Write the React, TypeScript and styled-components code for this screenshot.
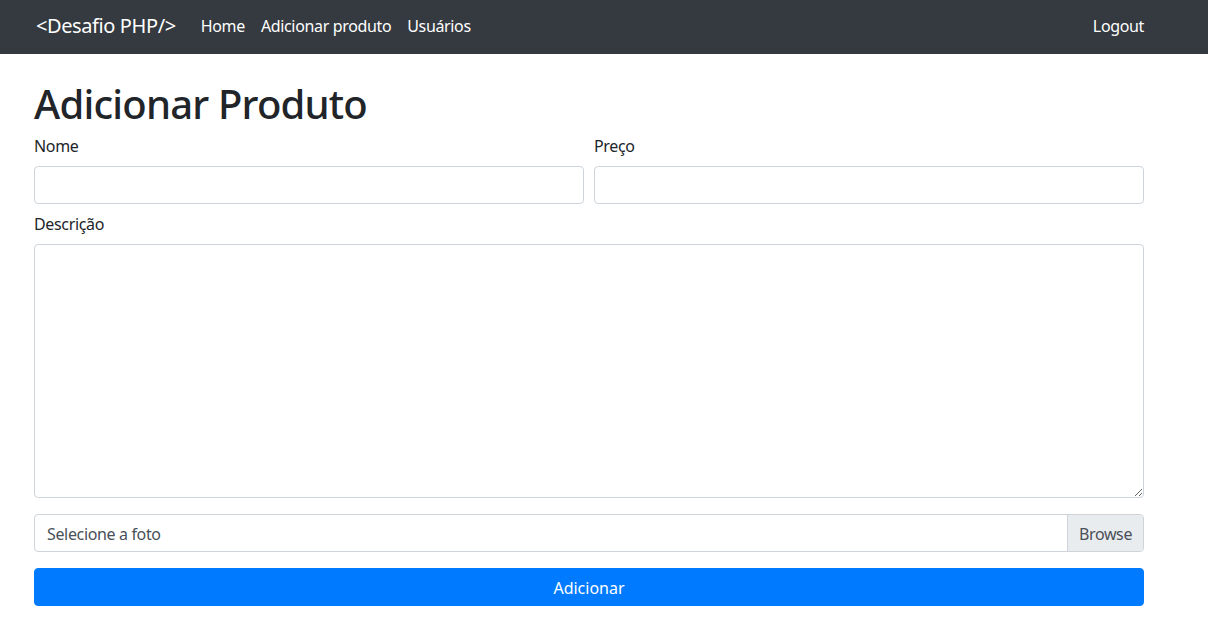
import React from "react";
import styled, { createGlobalStyle } from "styled-components";

const Global = createGlobalStyle`
  * { box-sizing: border-box; }
  body {
    margin: 0;
    font-family: "Noto Sans", "Open Sans", sans-serif;
    font-size: 16px;
    line-height: 1.5;
    letter-spacing: -0.35px;
    color: #212529;
    background: #fff;
  }
`;

const Navbar = styled.nav`
  background: #343a40;
  height: 54px;
`;

const Frame = styled.div`
  width: 1178px;
  height: 100%;
`;

const NavInner = styled.div`
  width: 1140px;
  height: 100%;
  margin: 0 auto;
  padding: 0 15px 2px;
  display: flex;
  align-items: center;
`;

const Brand = styled.a`
  color: #fff;
  font-size: 20px;
  line-height: 30px;
  letter-spacing: -0.4px;
  margin-left: 2px;
  margin-right: 17px;
  text-decoration: none;
  white-space: nowrap;
`;

const NavList = styled.div`
  display: flex;
  align-items: center;
`;

const NavLink = styled.a<{ $last?: boolean }>`
  color: #fff;
  font-size: 16px;
  line-height: 24px;
  padding: 0 ${(p) => (p.$last ? "0" : "8px")};
  text-decoration: none;
  white-space: nowrap;
`;

const Spacer = styled.div`
  flex: 1;
`;

const Container = styled.main`
  width: 1140px;
  margin: 0 auto;
  padding: 0 15px;
`;

const Title = styled.h1`
  font-size: 40px;
  font-weight: 500;
  line-height: 48px;
  letter-spacing: -0.8px;
  margin: 26px 0 6px;
`;

const Row = styled.div`
  display: grid;
  grid-template-columns: 1fr 1fr;
  gap: 10px;
  margin-bottom: 8px;
`;

const Group = styled.div<{ $mb?: number }>`
  display: flex;
  flex-direction: column;
  margin-bottom: ${(p) => p.$mb ?? 0}px;
`;

const Label = styled.label`
  font-size: 16px;
  line-height: 24px;
  margin-bottom: 8px;
`;

const Input = styled.input`
  height: 38px;
  border: 1px solid #ced4da;
  border-radius: 4px;
  padding: 6px 12px;
  font: inherit;
  color: #495057;
  outline: none;
`;

const TextArea = styled.textarea`
  height: 254px;
  border: 1px solid #ced4da;
  border-radius: 4px;
  padding: 6px 12px;
  font: inherit;
  color: #495057;
  resize: vertical;
  outline: none;
`;

const FileBox = styled.label`
  display: flex;
  height: 38px;
  border: 1px solid #ced4da;
  border-radius: 4px;
  overflow: hidden;
  margin-bottom: 16px;
  color: #495057;
  font-size: 16px;
  line-height: 24px;
`;

const FileText = styled.span`
  flex: 1;
  padding: 7px 12px 5px;
`;

const BrowseBtn = styled.span`
  width: 76px;
  text-align: center;
  background: #e9ecef;
  border-left: 1px solid #ced4da;
  padding: 7px 0 5px;
`;

const Submit = styled.button`
  width: 100%;
  height: 38px;
  background: #007bff;
  color: #fff;
  border: 1px solid #007bff;
  border-radius: 4px;
  font: inherit;
  font-size: 16px;
  line-height: 24px;
  padding: 2px 12px 0;
  cursor: pointer;
`;

export default function App() {
  return (
    <>
      <Global />
      <Navbar>
        <Frame>
          <NavInner>
            <Brand href="#">&lt;Desafio PHP/&gt;</Brand>
            <NavList>
              <NavLink href="#">Home</NavLink>
              <NavLink href="#">Adicionar produto</NavLink>
              <NavLink href="#">Usuários</NavLink>
            </NavList>
            <Spacer />
            <NavLink href="#" $last>
              Logout
            </NavLink>
          </NavInner>
        </Frame>
      </Navbar>
      <Frame>
        <Container>
          <Title>Adicionar Produto</Title>
          <form onSubmit={(e) => e.preventDefault()}>
            <Row>
              <Group>
                <Label>Nome</Label>
                <Input type="text" />
              </Group>
              <Group>
                <Label>Preço</Label>
                <Input type="text" />
              </Group>
            </Row>
            <Group $mb={16}>
              <Label>Descrição</Label>
              <TextArea />
            </Group>
            <FileBox>
              <FileText>Selecione a foto</FileText>
              <BrowseBtn>Browse</BrowseBtn>
            </FileBox>
            <Submit type="submit">Adicionar</Submit>
          </form>
        </Container>
      </Frame>
    </>
  );
}
